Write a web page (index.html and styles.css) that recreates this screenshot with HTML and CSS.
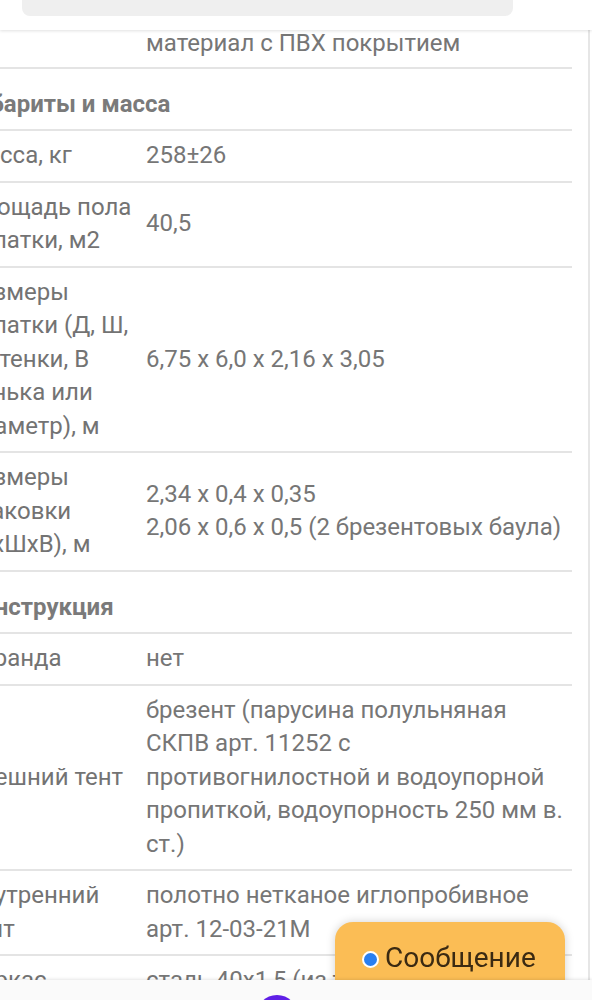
FILE: index.html
```html
<!DOCTYPE html>
<html lang="ru">
<head>
  <meta charset="UTF-8">
  <title>Характеристики палатки</title>
  <link rel="stylesheet" href="styles.css">
</head>
<body>

  <header class="topbar">
    <div class="search"></div>
  </header>

  <main class="page">
    <table class="specs">
      <tr>
        <td class="label first"></td>
        <td class="value first">материал с ПВХ покрытием</td>
      </tr>
      <tr class="group">
        <td colspan="2">Габариты и масса</td>
      </tr>
      <tr>
        <td class="label">Масса, кг</td>
        <td class="value">258±26</td>
      </tr>
      <tr>
        <td class="label">Площадь пола палатки, м2</td>
        <td class="value">40,5</td>
      </tr>
      <tr>
        <td class="label">Размеры палатки (Д, Ш, В стенки, В конька или диаметр), м</td>
        <td class="value">6,75 х 6,0 х 2,16 х 3,05</td>
      </tr>
      <tr>
        <td class="label">Размеры упаковки (ДхШхВ), м</td>
        <td class="value">2,34 х 0,4 х 0,35<br>2,06 х 0,6 х 0,5 (2 брезентовых баула)</td>
      </tr>
      <tr class="group">
        <td colspan="2">Конструкция</td>
      </tr>
      <tr>
        <td class="label">Веранда</td>
        <td class="value">нет</td>
      </tr>
      <tr>
        <td class="label">Внешний тент</td>
        <td class="value">брезент (парусина полульняная СКПВ арт. 11252 с противогнилостной и водоупорной пропиткой, водоупорность 250 мм в. ст.)</td>
      </tr>
      <tr>
        <td class="label">Внутренний тент</td>
        <td class="value">полотно нетканое иглопробивное арт. 12-03-21М</td>
      </tr>
      <tr>
        <td class="label">Каркас</td>
        <td class="value">сталь 40х1,5 (из трубы)</td>
      </tr>
    </table>
  </main>

  <a class="chat-btn" href="#"><span class="dot"></span>Сообщение</a>

  <nav class="bottombar">
    <span class="fab"></span>
  </nav>

</body>
</html>
```

FILE: styles.css
```css
body {
  margin: 0;
  font-family: Roboto, 'Noto Sans', sans-serif;
  background: #fff;
  color: #767676;
  overflow: hidden;
}

.topbar {
  position: fixed;
  top: 0;
  left: 0;
  right: 0;
  height: 30px;
  background: #fff;
  box-shadow: 0 1px 3px rgba(0,0,0,0.12);
  z-index: 5;
}

.search {
  margin: -10px 0 0 22px;
  width: 491px;
  height: 26px;
  background: #efefef;
  border-radius: 8px;
}

.page {
  width: 588px;
  padding-top: 27px;
  border-right: 2px solid #e6e6e6;
  height: 1000px;
  overflow: hidden;
}

.specs {
  margin-left: -46px;
  width: 618px;
  border-collapse: collapse;
  font-size: 24px;
  line-height: 33.5px;
}

.specs td {
  border-bottom: 2px solid #e4e4e4;
  padding: 8px 0;
  vertical-align: middle;
}

.specs td.label {
  width: 170px;
  padding-left: 12px;
  padding-right: 10px;
  color: #737373;
}

.specs td.value {
  padding-right: 2px;
}

.specs td.first {
  padding: 0 0 6px;
}

.specs td.label.first {
  padding-left: 12px;
}

.group td {
  padding: 19px 0 8px 12px;
  font-weight: bold;
  color: #7a7a7a;
}

.chat-btn {
  position: fixed;
  left: 335px;
  top: 922px;
  width: 230px;
  height: 80px;
  box-sizing: border-box;
  padding: 19px 0 0 27px;
  background: #fbbd55;
  border-radius: 18px;
  box-shadow: 0 0 10px rgba(0,0,0,0.18);
  color: #3b2a12;
  font-size: 28px;
  line-height: 34px;
  text-decoration: none;
  display: flex;
  align-items: flex-start;
  gap: 6px;
  z-index: 6;
}

.dot {
  width: 13px;
  height: 13px;
  margin-top: 10px;
  border-radius: 50%;
  background: #2a7ff0;
  border: 2px solid #fff;
}

.bottombar {
  position: fixed;
  left: 0;
  right: 0;
  top: 980px;
  height: 20px;
  background: #fafafa;
  box-shadow: 0 -1px 3px rgba(0,0,0,0.1);
  z-index: 7;
}

.fab {
  display: block;
  margin: 15px 0 0 256px;
  width: 42px;
  height: 42px;
  border-radius: 50%;
  background: #5f1fe6;
}
```
